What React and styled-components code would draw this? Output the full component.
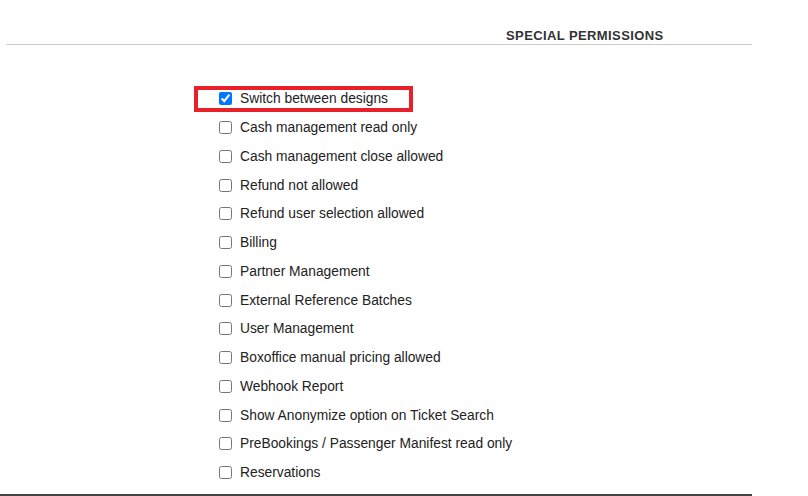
import styled, { createGlobalStyle } from "styled-components";

const GlobalStyle = createGlobalStyle`
  html, body {
    margin: 0;
    padding: 0;
    background: #fff;
    font-family: "Liberation Sans", Arial, sans-serif;
  }
`;

const Page = styled.div`
  width: 752px;
`;

const Header = styled.div`
  display: flex;
  align-items: flex-end;
  height: 44px;
  margin-left: 6px;
  border-bottom: 1px solid #cccccc;
`;

const Title = styled.h3`
  margin: 0 0 0 500px;
  font-size: 13px;
  line-height: 16px;
  font-weight: bold;
  letter-spacing: 0.4px;
  color: #333333;
`;

const List = styled.div`
  display: flex;
  flex-direction: column;
  padding: 39.4px 0 6.8px 198px;
`;

const Row = styled.div`
  display: flex;
  align-items: center;
  height: 28.77px;
`;

const Label = styled.label`
  display: inline-flex;
  align-items: center;
  gap: 8px;
  height: 18px;
  padding: 0 21px 0 21px;
  font-size: 13.8px;
  color: #222222;
  outline: ${(p) => (p.$highlight ? "4.5px solid #e8202a" : "none")};

  input {
    margin: 0;
    width: 13px;
    height: 13px;
  }
`;

const BottomBar = styled.div`
  height: 4px;
  background: #444444;
`;

const permissions = [
  { name: "Switch between designs", checked: true, highlight: true },
  { name: "Cash management read only" },
  { name: "Cash management close allowed" },
  { name: "Refund not allowed" },
  { name: "Refund user selection allowed" },
  { name: "Billing" },
  { name: "Partner Management" },
  { name: "External Reference Batches" },
  { name: "User Management" },
  { name: "Boxoffice manual pricing allowed" },
  { name: "Webhook Report" },
  { name: "Show Anonymize option on Ticket Search" },
  { name: "PreBookings / Passenger Manifest read only" },
  { name: "Reservations" },
];

export default function App() {
  return (
    <Page>
      <GlobalStyle />
      <Header>
        <Title>SPECIAL PERMISSIONS</Title>
      </Header>
      <List>
        {permissions.map((p) => (
          <Row key={p.name}>
            <Label $highlight={p.highlight}>
              <input type="checkbox" defaultChecked={!!p.checked} />
              {p.name}
            </Label>
          </Row>
        ))}
      </List>
      <BottomBar />
    </Page>
  );
}
